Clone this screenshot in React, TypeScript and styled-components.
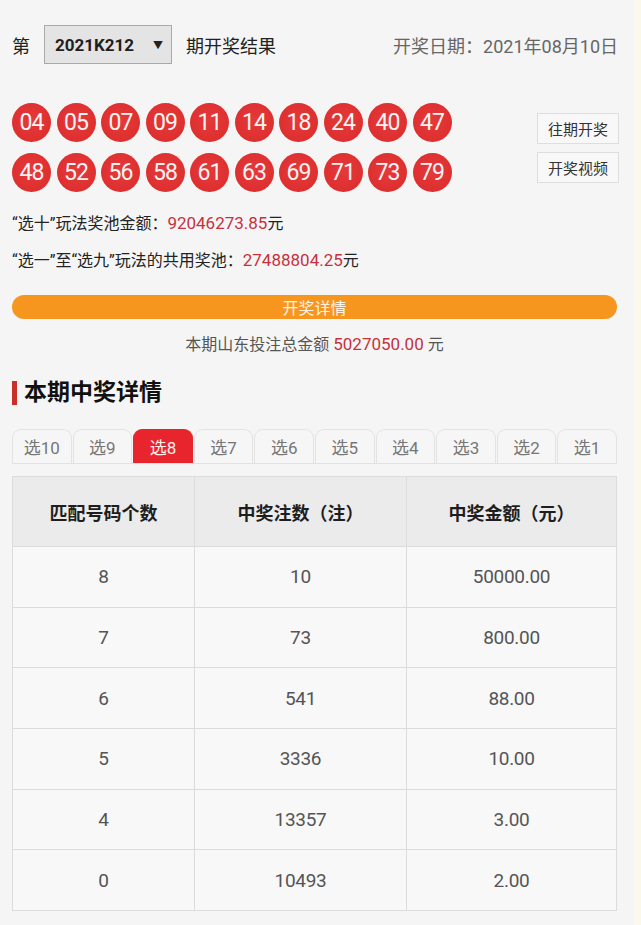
import React from 'react';
import styled, { createGlobalStyle } from 'styled-components';

const GlobalStyle = createGlobalStyle`
  html, body {
    margin: 0;
    padding: 0;
    background: #f5f5f5;
  }
  body {
    font-family: Roboto, "Noto Sans CJK SC", sans-serif;
    color: #333;
  }
`;

const firstRow = ['04', '05', '07', '09', '11', '14', '18', '24', '40', '47'];
const secondRow = ['48', '52', '56', '58', '61', '63', '69', '71', '73', '79'];
const tabs = ['选10', '选9', '选8', '选7', '选6', '选5', '选4', '选3', '选2', '选1'];
const prizes = [
  { match: '8', count: '10', amount: '50000.00' },
  { match: '7', count: '73', amount: '800.00' },
  { match: '6', count: '541', amount: '88.00' },
  { match: '5', count: '3336', amount: '10.00' },
  { match: '4', count: '13357', amount: '3.00' },
  { match: '0', count: '10493', amount: '2.00' },
];

export default function App() {
  return (
    <>
      <GlobalStyle />
      <Page>
        <Main>
          <Header>
            <IssuePicker>
              <Label>第</Label>
              <Select>
                <span>2021K212</span>
                <Caret>▼</Caret>
              </Select>
              <Label>期开奖结果</Label>
            </IssuePicker>
            <DrawDate>开奖日期：2021年08月10日</DrawDate>
          </Header>

          <DrawRow>
            <Balls>
              {[...firstRow, ...secondRow].map((n) => (
                <Ball key={n}>{n}</Ball>
              ))}
            </Balls>
            <SideButtons>
              <SideButton>往期开奖</SideButton>
              <SideButton>开奖视频</SideButton>
            </SideButtons>
          </DrawRow>

          <Pools>
            <PoolLine>
              “选十”玩法奖池金额：<Money>92046273.85</Money>元
            </PoolLine>
            <PoolLine>
              “选一”至“选九”玩法的共用奖池：<Money>27488804.25</Money>元
            </PoolLine>
          </Pools>

          <DetailButton>开奖详情</DetailButton>

          <TotalLine>
            本期山东投注总金额 <Money>5027050.00</Money> 元
          </TotalLine>

          <SectionTitle>本期中奖详情</SectionTitle>

          <Tabs>
            {tabs.map((t) => (
              <Tab key={t} $active={t === '选8'}>
                {t}
              </Tab>
            ))}
          </Tabs>

          <Table>
            <thead>
              <tr>
                <Th $width={181}>匹配号码个数</Th>
                <Th $width={211}>中奖注数（注）</Th>
                <Th>中奖金额（元）</Th>
              </tr>
            </thead>
            <tbody>
              {prizes.map((p) => (
                <tr key={p.match}>
                  <Td>{p.match}</Td>
                  <Td>{p.count}</Td>
                  <Td>{p.amount}</Td>
                </tr>
              ))}
            </tbody>
          </Table>
        </Main>
        <Edge />
      </Page>
    </>
  );
}

const Page = styled.div`
  display: flex;
  min-height: 925px;
`;

const Main = styled.div`
  flex: 1;
  padding: 25px 16px 10px 12px;
  display: flex;
  flex-direction: column;
`;

const Edge = styled.div`
  width: 8px;
  background: linear-gradient(90deg, #f6f7fb 0%, #fbf9e9 60%, #fbf8e6 100%);
`;

const Header = styled.div`
  display: flex;
  align-items: center;
  justify-content: space-between;
  height: 39px;
`;

const IssuePicker = styled.div`
  display: flex;
  align-items: center;
  gap: 14px;
`;

const Label = styled.span`
  font-size: 18px;
  color: #222;
`;

const Select = styled.div`
  box-sizing: border-box;
  width: 128px;
  height: 39px;
  display: flex;
  align-items: center;
  justify-content: space-between;
  padding: 0 8px 0 10px;
  background: #e4e4e4;
  border: 1px solid #a9a9a9;
  font-size: 17px;
  font-weight: 700;
  color: #1f1f1f;
`;

const Caret = styled.span`
  font-size: 10px;
  color: #222;
`;

const DrawDate = styled.span`
  font-size: 18px;
  color: #666;
  margin-right: -1px;
`;

const DrawRow = styled.div`
  margin-top: 39px;
  display: flex;
  align-items: center;
  justify-content: space-between;
`;

const Balls = styled.div`
  display: grid;
  grid-template-columns: repeat(10, 39px);
  column-gap: 5.5px;
  row-gap: 11px;
`;

const Ball = styled.div`
  width: 39px;
  height: 39px;
  border-radius: 50%;
  background: radial-gradient(circle at 50% 45%, #e43a3a 0%, #df3030 65%, #d42a2c 100%);
  color: #fdf3f3;
  display: flex;
  align-items: center;
  justify-content: center;
  font-size: 23px;
  letter-spacing: -1px;
`;

const SideButtons = styled.div`
  display: flex;
  flex-direction: column;
  gap: 8px;
  margin-right: -2px;
`;

const SideButton = styled.div`
  box-sizing: border-box;
  width: 82px;
  height: 31px;
  display: flex;
  align-items: center;
  justify-content: center;
  border: 1px solid #dedede;
  background: #f8f8f8;
  font-size: 15px;
  color: #333;
`;

const Pools = styled.div`
  margin-top: 13px;
  display: flex;
  flex-direction: column;
`;

const PoolLine = styled.div`
  font-size: 16px;
  line-height: 36px;
  color: #222;
`;

const Money = styled.span`
  color: #c5323c;
  font-size: 17px;
`;

const DetailButton = styled.div`
  margin-top: 16px;
  height: 24px;
  border-radius: 12px;
  background: #f7961f;
  color: #fff4e2;
  font-size: 16px;
  display: flex;
  align-items: center;
  justify-content: center;
`;

const TotalLine = styled.div`
  margin-top: 10px;
  line-height: 30px;
  font-size: 16px;
  color: #555;
  text-align: center;
`;

const SectionTitle = styled.h2`
  margin: 20px 0 0;
  display: flex;
  align-items: center;
  gap: 7px;
  font-size: 23px;
  font-weight: 700;
  line-height: 26px;
  color: #111;
  &::before {
    content: '';
    width: 5px;
    height: 24px;
    background: #c8302a;
  }
`;

const Tabs = styled.div`
  margin-top: 23px;
  display: flex;
  gap: 1px;
  border-bottom: 1px solid #e2e2e2;
`;

const Tab = styled.div<{ $active?: boolean }>`
  flex: 1;
  height: 33px;
  display: flex;
  align-items: center;
  justify-content: center;
  border: 1px solid ${(p) => (p.$active ? '#e8252d' : '#e3e3e3')};
  border-bottom: none;
  border-radius: 9px 9px 0 0;
  background: ${(p) => (p.$active ? '#e8252d' : '#f6f6f6')};
  color: ${(p) => (p.$active ? '#fff0f0' : '#777')};
  font-size: 17px;
`;

const Table = styled.table`
  margin-top: 12px;
  width: 100%;
  border-collapse: collapse;
  background: #f8f8f8;
`;

const Th = styled.th<{ $width?: number }>`
  width: ${(p) => (p.$width ? `${p.$width}px` : 'auto')};
  height: 69px;
  padding: 0;
  border: 1px solid #dcdcdc;
  background: #ebebeb;
  font-size: 18px;
  font-weight: 700;
  color: #1e1e1e;
  text-align: center;
`;

const Td = styled.td`
  height: 59.7px;
  padding: 0;
  border: 1px solid #dcdcdc;
  text-align: center;
  font-size: 19px;
  letter-spacing: -0.3px;
  color: #555;
`;
